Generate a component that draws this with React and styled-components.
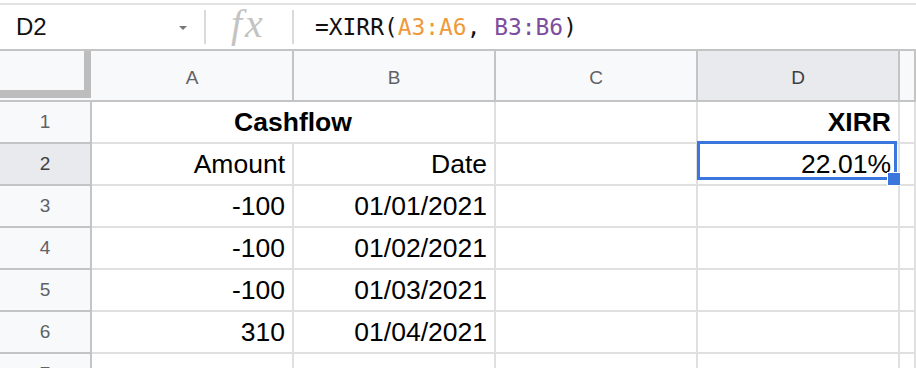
import React from "react";
import styled, { createGlobalStyle } from "styled-components";

const GlobalStyle = createGlobalStyle`
  html, body {
    margin: 0;
    padding: 0;
    background: #ffffff;
    overflow: hidden;
  }
  body {
    font-family: "Liberation Sans", Arial, sans-serif;
  }
`;

const Page = styled.div`
  width: 916px;
  height: 368px;
  padding-top: 3px;
  box-sizing: border-box;
  overflow: hidden;
`;

const FormulaBar = styled.div`
  display: flex;
  align-items: center;
  height: 48px;
  box-sizing: border-box;
  border-top: 2px solid #e3e3e3;
  border-bottom: 2px solid #c4c4c4;
`;

const NameBox = styled.div`
  display: flex;
  align-items: center;
  justify-content: space-between;
  width: 204px;
  box-sizing: border-box;
  padding: 0 17px 0 16px;
  font-size: 24px;
  color: #111;
`;

const Caret = styled.span`
  width: 0;
  height: 0;
  border-left: 4px solid transparent;
  border-right: 4px solid transparent;
  border-top: 4px solid #777;
  margin-top: 2px;
`;

const Divider = styled.div`
  width: 2px;
  height: 34px;
  background: #dadada;
`;

const FxLabel = styled.div`
  width: 86px;
  box-sizing: border-box;
  padding-left: 25px;
  font-family: "Liberation Serif", "Times New Roman", serif;
  font-style: italic;
  font-size: 40px;
  letter-spacing: 3px;
  color: #c3c3c3;
  line-height: 1;
  margin-top: -6px;
`;

const Formula = styled.div`
  padding-left: 21px;
  font-family: "DejaVu Sans Mono", "Liberation Mono", monospace;
  font-size: 22.9px;
  color: #111;
  white-space: pre;
`;

const Ref = styled.span`
  color: ${(p) => p.$color};
`;

const Grid = styled.div`
  display: grid;
  grid-template-columns: 92px 202px 202px 202px 202px 1fr;
  grid-template-rows: 51px repeat(7, 42px);
`;

const Corner = styled.div`
  display: flex;
  background: #f8f9fa;
  padding: 0 1px 2px 0;
  border-bottom: 2px solid #c4c4c4;
`;

const CornerBar = styled.div`
  flex: 1;
  border-right: 7px solid #bdbdbd;
  border-bottom: 8px solid #bdbdbd;
`;

const ColHeader = styled.div`
  display: flex;
  align-items: center;
  justify-content: center;
  padding-top: 4px;
  background: ${(p) => (p.$active ? "#e8eaed" : "#f8f9fa")};
  border-right: 2px solid #c4c4c4;
  border-bottom: 2px solid #c4c4c4;
  font-size: 19px;
  color: ${(p) => (p.$active ? "#3c4043" : "#5f6368")};
`;

const RowHeader = styled.div`
  display: flex;
  align-items: center;
  justify-content: center;
  background: ${(p) => (p.$active ? "#e8eaed" : "#f8f9fa")};
  border-right: 2px solid #c4c4c4;
  border-bottom: 2px solid #c4c4c4;
  font-size: 19px;
  color: ${(p) => (p.$active ? "#3c4043" : "#5f6368")};
`;

const Cell = styled.div`
  position: relative;
  display: flex;
  align-items: center;
  justify-content: ${(p) =>
    p.$align === "center" ? "center" : p.$align === "left" ? "flex-start" : "flex-end"};
  grid-column: span ${(p) => p.$span || 1};
  padding: 0 7px 0 7px;
  border-right: 2px solid #e0e0e0;
  border-bottom: 2px solid #e0e0e0;
  font-size: 26.5px;
  font-weight: ${(p) => (p.$bold ? 700 : 400)};
  color: #000;
  white-space: nowrap;
`;

const Selection = styled.div`
  position: absolute;
  left: -1px;
  top: -3px;
  right: 1px;
  bottom: 4px;
  border: 3px solid #3b76dc;
  pointer-events: none;
`;

const Handle = styled.div`
  position: absolute;
  right: -7px;
  bottom: -9px;
  width: 12px;
  height: 12px;
  background: #3b76dc;
  border: 1px solid #ffffff;
`;

const columns = ["A", "B", "C", "D"];

const rows = [
  { n: 1, cells: [{ text: "Cashflow", bold: true, align: "center", span: 2 }, {}, { text: "XIRR", bold: true }, {}] },
  { n: 2, active: true, cells: [{ text: "Amount" }, { text: "Date" }, {}, { text: "22.01%", selected: true }, {}] },
  { n: 3, cells: [{ text: "-100" }, { text: "01/01/2021" }, {}, {}, {}] },
  { n: 4, cells: [{ text: "-100" }, { text: "01/02/2021" }, {}, {}, {}] },
  { n: 5, cells: [{ text: "-100" }, { text: "01/03/2021" }, {}, {}, {}] },
  { n: 6, cells: [{ text: "310" }, { text: "01/04/2021" }, {}, {}, {}] },
  { n: 7, cells: [{}, {}, {}, {}, {}] },
];

export default function App() {
  return (
    <Page>
      <GlobalStyle />
      <FormulaBar>
        <NameBox>
          D2
          <Caret />
        </NameBox>
        <Divider />
        <FxLabel>fx</FxLabel>
        <Divider />
        <Formula>
          =XIRR(<Ref $color="#ee9a3c">A3:A6</Ref>, <Ref $color="#7e4c9e">B3:B6</Ref>)
        </Formula>
      </FormulaBar>
      <Grid>
        <Corner>
          <CornerBar />
        </Corner>
        {columns.map((c) => (
          <ColHeader key={c} $active={c === "D"}>
            {c}
          </ColHeader>
        ))}
        <ColHeader />
        {rows.map((row) => (
          <React.Fragment key={row.n}>
            <RowHeader $active={row.active}>{row.n}</RowHeader>
            {row.cells.map((cell, i) => (
              <Cell key={i} $align={cell.align} $bold={cell.bold} $span={cell.span}>
                {cell.text}
                {cell.selected && (
                  <Selection>
                    <Handle />
                  </Selection>
                )}
              </Cell>
            ))}
          </React.Fragment>
        ))}
      </Grid>
    </Page>
  );
}
